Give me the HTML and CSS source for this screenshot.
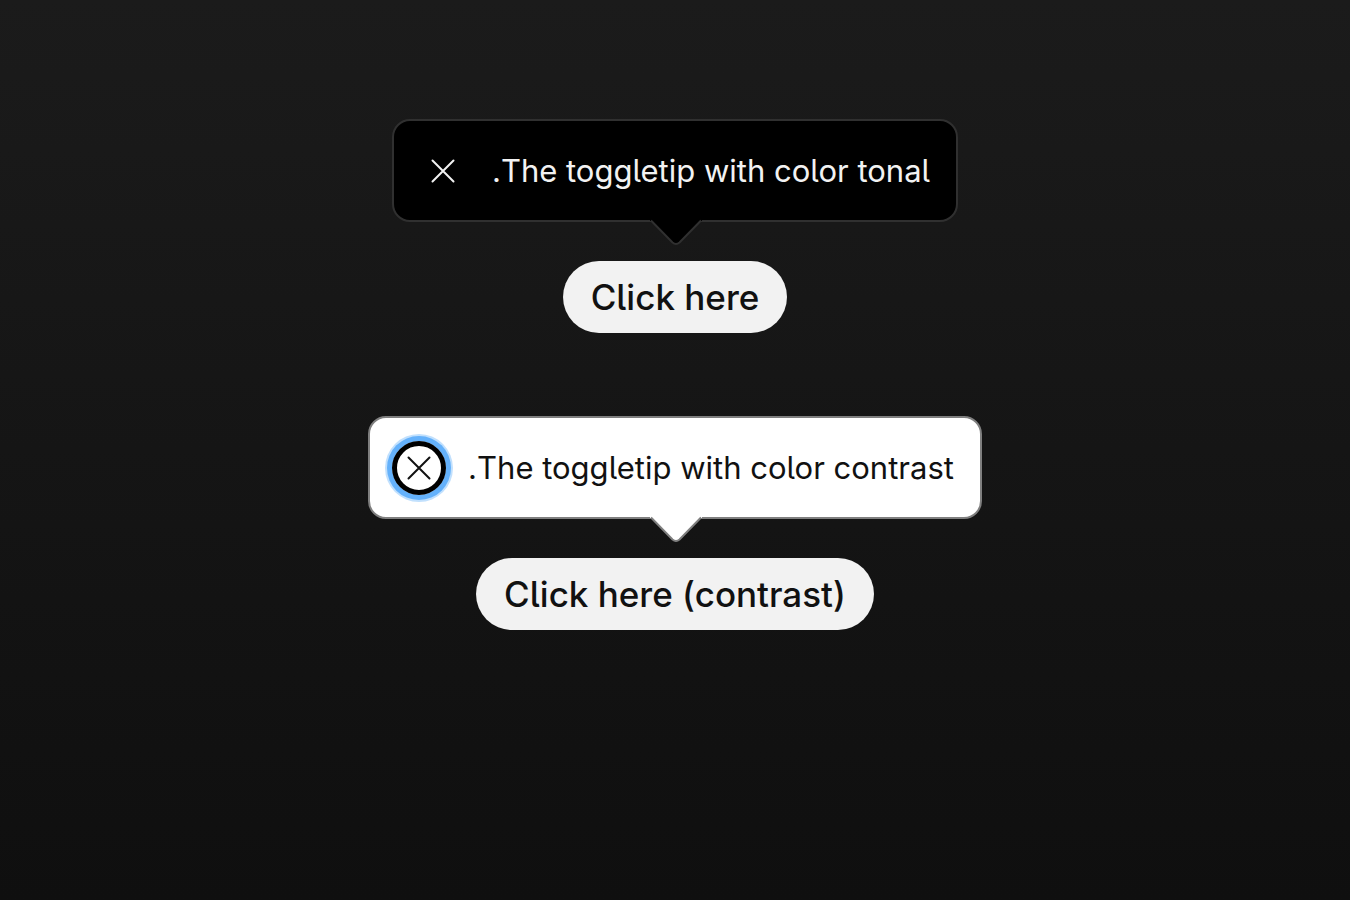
FILE: index.html
```html
<!DOCTYPE html>
<html lang="en" dir="rtl">
<head>
<meta charset="utf-8">
<title>Toggletip</title>
<link rel="stylesheet" href="styles.css">
</head>
<body>
<main class="stage">
  <section class="demo">
    <div class="toggletip tonal" role="status">
      <p class="message">The toggletip with color tonal.</p>
      <button class="close" type="button" aria-label="Close">
        <svg class="cross" viewBox="0 0 24 24" aria-hidden="true"><path d="M1.5 1.5 22.5 22.5M22.5 1.5 1.5 22.5"/></svg>
      </button>
      <svg class="arrow" viewBox="0 0 52 28" aria-hidden="true"><path d="M0 0V2H1L22.5 23.5Q26 27 29.500 23.5L51 2H52V0Z"/><path class="edge" d="M1 1.500 22.500 23.500Q26 26.500 29.500 23.500L51 1.500"/></svg>
    </div>
    <button class="trigger" type="button">Click here</button>
  </section>
  <section class="demo">
    <div class="toggletip contrast" role="status">
      <p class="message">The toggletip with color contrast.</p>
      <button class="close focused" type="button" aria-label="Close">
        <svg class="cross" viewBox="0 0 24 24" aria-hidden="true"><path d="M1.5 1.5 22.5 22.5M22.5 1.5 1.5 22.5"/></svg>
      </button>
      <svg class="arrow" viewBox="0 0 52 28" aria-hidden="true"><path d="M0 0V2H1L22.5 23.5Q26 27 29.500 23.5L51 2H52V0Z"/><path class="edge" d="M1 1.500 22.500 23.500Q26 26.500 29.500 23.500L51 1.500"/></svg>
    </div>
    <button class="trigger" type="button">Click here (contrast)</button>
  </section>
</main>
</body>
</html>
```
FILE: styles.css
```css
* { box-sizing: border-box; }
body {
  margin: 0;
  font-family: Inter, "Liberation Sans", sans-serif;
  font-feature-settings: "cv05";
}
.stage {
  display: flex;
  flex-direction: column;
  align-items: center;
  gap: 83px;
  min-height: 100vh;
  padding: 119px 24px 24px;
  background: linear-gradient(#1b1b1b, #0f0f0f);
}
.demo {
  display: flex;
  flex-direction: column;
  align-items: center;
  gap: 39px;
}
.toggletip {
  position: relative;
  display: flex;
  align-items: center;
  gap: 22px;
  padding: 22px 26px 22px 22px;
  border: 2px solid var(--edge);
  border-radius: 18px;
  background: var(--fill);
  color: var(--ink);
}
.tonal { --fill: #000; --edge: #303030; --ink: #f2f2f2; }
.contrast { --fill: #fff; --edge: #7f7f7f; --ink: #111; }
.message {
  margin: 0;
  font-size: 31px;
  line-height: 55px;
}
.close {
  display: grid;
  place-items: center;
  width: 54px;
  height: 54px;
  padding: 0;
  border: 0;
  border-radius: 50%;
  background: transparent;
  color: inherit;
}
.focused {
  border: 5px solid #000;
  box-shadow: 0 0 0 5px #64b1fb, 0 0 0 7px #c1e0fd;
}
.cross {
  width: 24px;
  height: 24px;
  fill: none;
  stroke: currentColor;
  stroke-width: 2;
  stroke-linecap: round;
}
.arrow {
  position: absolute;
  top: calc(100% - 1px);
  left: 50%;
  width: 52px;
  height: 28px;
  margin-left: -25px;
  fill: var(--fill);
}
.edge {
  fill: none;
  stroke: var(--edge);
  stroke-width: 2;
}
.trigger {
  padding: 0 28px;
  border: 0;
  border-radius: 36px;
  background: #f2f2f2;
  color: #111;
  font: 500 35px/72px Inter, "Liberation Sans", sans-serif;
  font-feature-settings: "cv05";
}
```
